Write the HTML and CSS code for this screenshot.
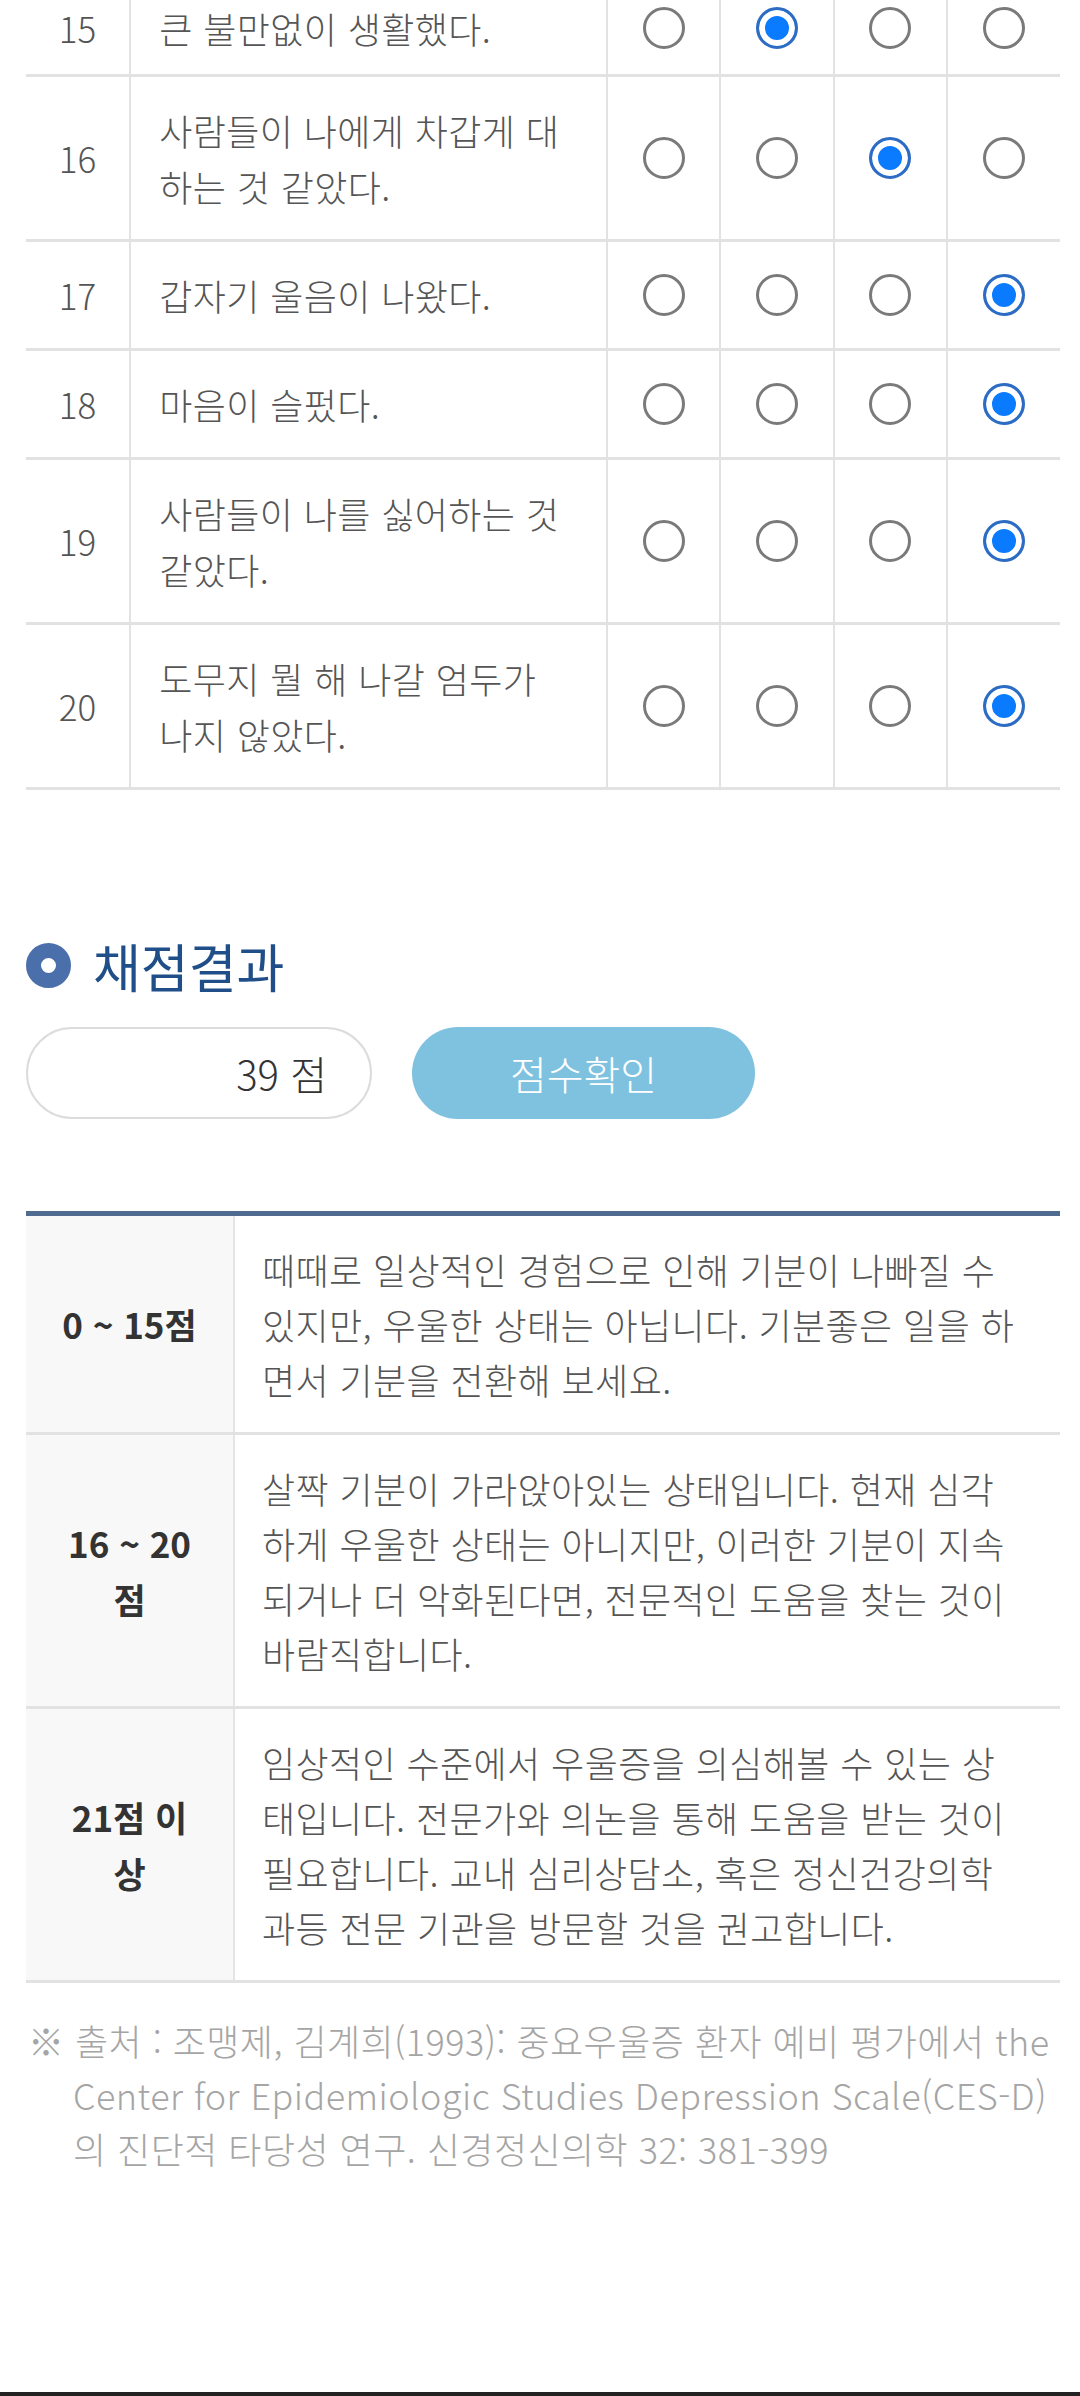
FILE: index.html
```html
<!DOCTYPE html>
<html lang="ko">
<head>
    <meta charset="UTF-8">
    <title>우울 척도 검사</title>
    <link rel="stylesheet" href="styles.css">
</head>
<body>

<table class="survey">
    <colgroup>
        <col class="col_no">
        <col class="col_q">
        <col class="col_a">
        <col class="col_a">
        <col class="col_a">
        <col class="col_a">
    </colgroup>
    <tr class="first">
        <td class="no">15</td>
        <td class="q">큰 불만없이 생활했다.</td>
        <td class="a"><input type="radio" name="q15"></td>
        <td class="a"><input type="radio" name="q15" checked></td>
        <td class="a"><input type="radio" name="q15"></td>
        <td class="a"><input type="radio" name="q15"></td>
    </tr>
    <tr>
        <td class="no">16</td>
        <td class="q">사람들이 나에게 차갑게 대하는 것 같았다.</td>
        <td class="a"><input type="radio" name="q16"></td>
        <td class="a"><input type="radio" name="q16"></td>
        <td class="a"><input type="radio" name="q16" checked></td>
        <td class="a"><input type="radio" name="q16"></td>
    </tr>
    <tr>
        <td class="no">17</td>
        <td class="q">갑자기 울음이 나왔다.</td>
        <td class="a"><input type="radio" name="q17"></td>
        <td class="a"><input type="radio" name="q17"></td>
        <td class="a"><input type="radio" name="q17"></td>
        <td class="a"><input type="radio" name="q17" checked></td>
    </tr>
    <tr>
        <td class="no">18</td>
        <td class="q">마음이 슬펐다.</td>
        <td class="a"><input type="radio" name="q18"></td>
        <td class="a"><input type="radio" name="q18"></td>
        <td class="a"><input type="radio" name="q18"></td>
        <td class="a"><input type="radio" name="q18" checked></td>
    </tr>
    <tr>
        <td class="no">19</td>
        <td class="q">사람들이 나를 싫어하는 것 같았다.</td>
        <td class="a"><input type="radio" name="q19"></td>
        <td class="a"><input type="radio" name="q19"></td>
        <td class="a"><input type="radio" name="q19"></td>
        <td class="a"><input type="radio" name="q19" checked></td>
    </tr>
    <tr>
        <td class="no">20</td>
        <td class="q">도무지 뭘 해 나갈 엄두가 나지 않았다.</td>
        <td class="a"><input type="radio" name="q20"></td>
        <td class="a"><input type="radio" name="q20"></td>
        <td class="a"><input type="radio" name="q20"></td>
        <td class="a"><input type="radio" name="q20" checked></td>
    </tr>
</table>

<h2 class="result_title"><span class="dot"></span>채점결과</h2>

<div class="score_box">
    <div class="score_input">39 점</div>
    <button class="score_btn">점수확인</button>
</div>

<table class="result">
    <tr>
        <th>0 ~ 15점</th>
        <td>때때로 일상적인 경험으로 인해 기분이 나빠질 수 있지만, 우울한 상태는 아닙니다. 기분좋은 일을 하면서 기분을 전환해 보세요.</td>
    </tr>
    <tr>
        <th>16 ~ 20점</th>
        <td>살짝 기분이 가라앉아있는 상태입니다. 현재 심각하게 우울한 상태는 아니지만, 이러한 기분이 지속되거나 더 악화된다면, 전문적인 도움을 찾는 것이 바람직합니다.</td>
    </tr>
    <tr>
        <th>21점 이상</th>
        <td>임상적인 수준에서 우울증을 의심해볼 수 있는 상태입니다. 전문가와 의논을 통해 도움을 받는 것이 필요합니다. 교내 심리상담소, 혹은 정신건강의학과등 전문 기관을 방문할 것을 권고합니다.</td>
    </tr>
</table>

<p class="source">※ 출처 : 조맹제, 김계희(1993): 중요우울증 환자 예비 평가에서 the Center for Epidemiologic Studies Depression Scale(CES-D)의 진단적 타당성 연구. 신경정신의학 32: 381-399</p>

<div class="nav_edge"></div>
</body>
</html>
```

FILE: styles.css
```css
body {
    margin: 0;
    padding: 0 20px 120px 26px;
    background: #fff;
    font-family: "Noto Sans CJK KR", "Noto Sans", sans-serif;
    font-weight: 300;
    font-size: 35px;
    color: #555;
}

/* 문항 표 */
.survey {
    width: 1034px;
    margin-top: -22px;
    border-collapse: collapse;
    table-layout: fixed;
}

.col_no { width: 104px; }
.col_q { width: 476px; }
.col_a { width: 113px; }

.survey td {
    border-bottom: 3px solid #e2e2e2;
    border-left: 2px solid #e2e2e2;
    padding: 25px 0;
    line-height: 56px;
    vertical-align: middle;
}

.survey .first td {
    padding: 22px 0 18px;
}

.survey td:first-child {
    border-left: none;
}

.survey .no {
    text-align: center;
}

.survey .q,
.survey .first .q {
    padding-left: 28px;
    padding-right: 38px;
    font-size: 36px;
    letter-spacing: 0.4px;
}

.survey .a {
    text-align: center;
}

.survey input {
    appearance: none;
    -webkit-appearance: none;
    display: block;
    margin: 0 auto;
    width: 42px;
    height: 42px;
    border: 3px solid #7a7a7a;
    border-radius: 50%;
    background: #fff;
    box-sizing: border-box;
}

.survey input:checked {
    border-color: #2d6cc2;
    background: #0a7bff;
    box-shadow: inset 0 0 0 6px #fff;
}

/* 채점결과 */
.result_title {
    display: flex;
    align-items: center;
    height: 60px;
    margin: 145px 0 0;
    font-size: 52px;
    font-weight: 400;
    color: #1f4e88;
}

.result_title .dot {
    width: 45px;
    height: 45px;
    border: 15px solid #4b6faa;
    border-radius: 50%;
    box-sizing: border-box;
    margin-right: 22px;
}

.score_box {
    display: flex;
    gap: 40px;
    margin-top: 32px;
}

.score_input {
    width: 346px;
    height: 92px;
    box-sizing: border-box;
    border: 2px solid #dcdcdc;
    border-radius: 46px;
    padding-right: 43px;
    text-align: right;
    line-height: 88px;
    font-size: 40px;
    color: #333;
}

.score_btn {
    width: 343px;
    height: 92px;
    border: none;
    border-radius: 46px;
    background: #7fc2e0;
    color: #fff;
    font-family: inherit;
    font-weight: 300;
    font-size: 40px;
}

/* 결과 해석 표 */
.result {
    width: 1034px;
    margin-top: 92px;
    border-collapse: collapse;
    border-top: 5px solid #4f6c90;
}

.result th {
    width: 208px;
    box-sizing: border-box;
    padding: 0 36px;
    background: #f8f8f8;
    border-right: 2px solid #e5e5e5;
    border-bottom: 3px solid #e2e2e2;
    font-weight: 700;
    color: #333;
    line-height: 56px;
}

.result td {
    padding: 26px 40px 25px 27px;
    border-bottom: 3px solid #e2e2e2;
    line-height: 55px;
    font-size: 36px;
    letter-spacing: 0.4px;
}

.source {
    margin: 30px 0 0;
    padding-left: 47px;
    text-indent: -45px;
    line-height: 54px;
    font-size: 36px;
    letter-spacing: 0.45px;
    color: #a5a5a5;
}

.nav_edge {
    position: fixed;
    left: 0;
    right: 0;
    bottom: 0;
    height: 4px;
    background: #222;
}
```
